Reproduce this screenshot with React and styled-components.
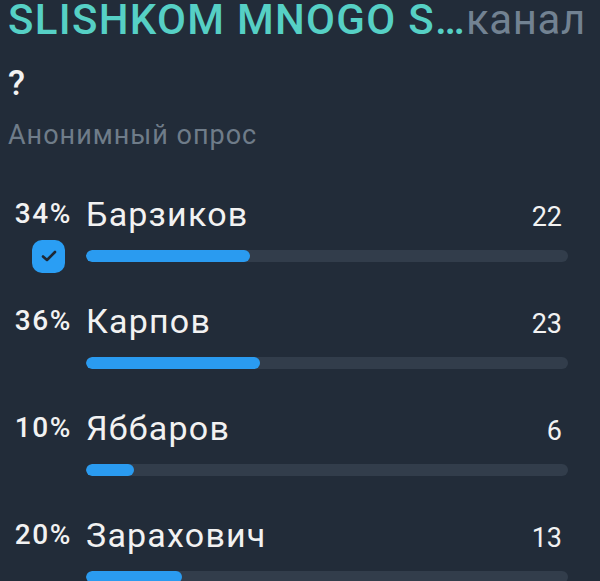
import React from "react";
import styled, { createGlobalStyle } from "styled-components";

const Global = createGlobalStyle`
  html, body {
    margin: 0;
    padding: 0;
    background: #222c39;
  }
  body {
    font-family: Roboto, "Noto Sans", "Liberation Sans", sans-serif;
    -webkit-font-smoothing: antialiased;
  }
`;

const Page = styled.div`
  width: 600px;
  height: 581px;
  overflow: hidden;
  background: #222c39;
  padding: 0 0 0 8px;
  box-sizing: border-box;
`;

const Header = styled.div`
  display: flex;
  align-items: baseline;
  white-space: nowrap;
  font-size: 42px;
  line-height: 40px;
  letter-spacing: 1.3px;
`;

const Channel = styled.span`
  color: #56d0c5;
  font-weight: 500;
`;

const Kind = styled.span`
  color: #728292;
  font-weight: 400;
  letter-spacing: 0.6px;
`;

const Question = styled.div`
  margin-top: 24px;
  color: #f2f2f2;
  font-size: 35px;
  line-height: 40px;
  font-weight: 500;
`;

const PollType = styled.div`
  margin-top: 15px;
  color: #6f7c89;
  font-size: 27px;
  line-height: 32px;
  letter-spacing: 1px;
`;

const Options = styled.div`
  margin-top: 43px;
  margin-left: -8px;
  display: flex;
  flex-direction: column;
  gap: 29px;
`;

const Option = styled.div`
  display: grid;
  grid-template-columns: 86px 1fr;
  grid-template-rows: 40px 32px;
  row-gap: 6px;
  padding-right: 32px;
`;

const Percent = styled.div`
  color: #f2f2f2;
  font-size: 28px;
  font-weight: 500;
  line-height: 40px;
  letter-spacing: 1.6px;
  text-align: right;
  padding-right: 14px;
`;

const Label = styled.div`
  display: flex;
  align-items: baseline;
  justify-content: space-between;
  line-height: 40px;
`;

const Name = styled.span`
  color: #f2f2f2;
  font-size: 34px;
  letter-spacing: 1.2px;
`;

const Votes = styled.span`
  color: #f2f2f2;
  font-size: 27px;
  margin-right: 6px;
`;

const Mark = styled.div`
  display: flex;
  align-items: center;
  padding-left: 32px;
`;

const CheckBox = styled.div`
  width: 33px;
  height: 33px;
  border-radius: 10px;
  background: #2a9ef4;
  display: flex;
  align-items: center;
  justify-content: center;
`;

const Track = styled.div`
  align-self: center;
  height: 12px;
  border-radius: 6px;
  background: #323d4b;
  overflow: hidden;
`;

const Fill = styled.div`
  height: 100%;
  border-radius: 6px;
  background: #2a9bf0;
`;

const options = [
  { pct: 34, name: "Барзиков", votes: 22, chosen: true },
  { pct: 36, name: "Карпов", votes: 23 },
  { pct: 10, name: "Яббаров", votes: 6 },
  { pct: 20, name: "Зарахович", votes: 13 },
];

function Tick() {
  return (
    <svg width="18" height="14" viewBox="0 0 18 14">
      <path
        d="M3 7.5 L7 11 L15 3"
        fill="none"
        stroke="#1e2835"
        strokeWidth="2.6"
        strokeLinecap="round"
        strokeLinejoin="round"
      />
    </svg>
  );
}

export default function App() {
  return (
    <Page>
      <Global />
      <Header>
        <Channel>SLISHKOM MNOGO S…</Channel>
        <Kind>канал</Kind>
      </Header>
      <Question>?</Question>
      <PollType>Анонимный опрос</PollType>
      <Options>
        {options.map((o) => (
          <Option key={o.name}>
            <Percent>{o.pct}%</Percent>
            <Label>
              <Name>{o.name}</Name>
              <Votes>{o.votes}</Votes>
            </Label>
            <Mark>
              {o.chosen && (
                <CheckBox>
                  <Tick />
                </CheckBox>
              )}
            </Mark>
            <Track>
              <Fill style={{ width: `${o.pct}%` }} />
            </Track>
          </Option>
        ))}
      </Options>
    </Page>
  );
}
